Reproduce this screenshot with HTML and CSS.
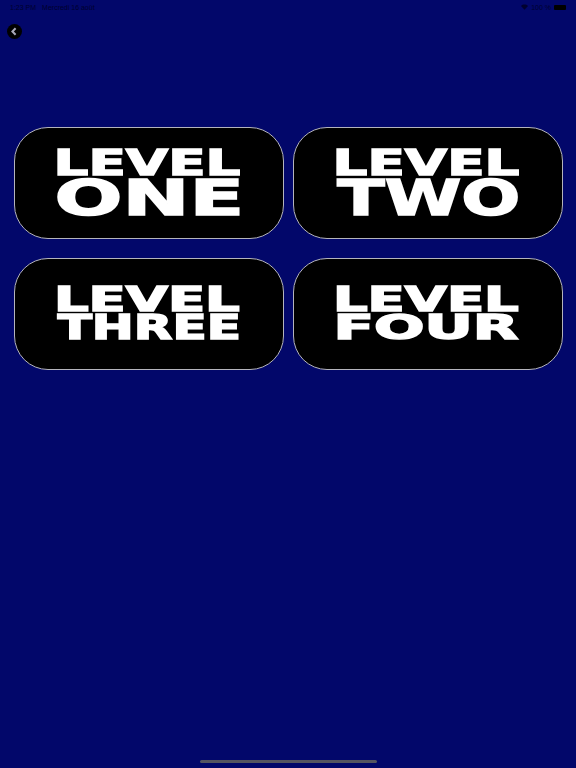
FILE: index.html
```html
<!DOCTYPE html>
<html lang="fr">
<head>
    <meta charset="UTF-8">
    <meta name="viewport" content="width=device-width, initial-scale=1.0">
    <title>Levels</title>
    <link rel="stylesheet" href="styles.css">
</head>
<body>
    <div class="page">
        <div class="status-bar">
            <div class="status-left">
                <span>1:23 PM</span>
                <span>Mercredi 16 août</span>
            </div>
            <div class="status-right">
                <svg class="wifi" viewBox="0 0 12 9" width="7" height="6">
                    <path d="M6 9 0 2.6C3.4-.8 8.6-.8 12 2.6z"/>
                </svg>
                <span>100 %</span>
                <div class="battery"></div>
            </div>
        </div>

        <button class="back-btn" aria-label="Retour">
            <svg viewBox="0 0 15 15" width="15" height="15">
                <path d="M8.6 4.2 5.4 7.5l3.2 3.3"/>
            </svg>
        </button>

        <div class="levels">
            <div class="level-card">
                <span class="word word-level">LEVEL</span>
                <span class="word word-big word-one">ONE</span>
            </div>
            <div class="level-card">
                <span class="word word-level">LEVEL</span>
                <span class="word word-big word-two">TWO</span>
            </div>
            <div class="level-card">
                <span class="word word-small word-level-small">LEVEL</span>
                <span class="word word-small word-three">THREE</span>
            </div>
            <div class="level-card">
                <span class="word word-small word-level-small">LEVEL</span>
                <span class="word word-small word-four">FOUR</span>
            </div>
        </div>

        <div class="home-bar"></div>
    </div>
</body>
</html>
```

FILE: styles.css
```css
body {
    margin: 0;
    background-color: #02076a;
    font-family: "Liberation Sans", Arial, sans-serif;
}

.page {
    height: 768px;
    display: flex;
    flex-direction: column;
    overflow: hidden;
}

.status-bar {
    height: 14px;
    padding: 0 10px;
    display: flex;
    justify-content: space-between;
    align-items: center;
    font-size: 7px;
    color: #00012e;
}

.status-left {
    display: flex;
    gap: 6px;
}

.status-right {
    display: flex;
    align-items: center;
    gap: 3px;
}

.wifi {
    fill: #00012e;
}

.battery {
    width: 12px;
    height: 5px;
    border-radius: 1px;
    background: #000;
}

.back-btn {
    width: 15px;
    height: 15px;
    margin: 10px 0 0 7px;
    padding: 0;
    border: none;
    border-radius: 50%;
    background: #000;
    display: block;
}

.back-btn svg {
    display: block;
    fill: none;
    stroke: #a8a8b8;
    stroke-width: 2;
}

.levels {
    margin-top: 88px;
    padding: 0 14px;
    display: grid;
    grid-template-columns: 269.5px 269.5px;
    grid-auto-rows: 112px;
    column-gap: 9.5px;
    row-gap: 19px;
}

.level-card {
    box-sizing: border-box;
    background: #000;
    border: 1px solid #b4b4bc;
    border-radius: 34px;
    display: flex;
    flex-direction: column;
    align-items: center;
    justify-content: center;
}

/* the words are a wide heavy display face, so stretch a bold one */
.word {
    display: block;
    width: max-content;
    will-change: transform;
    font-family: "DejaVu Sans", sans-serif;
    font-weight: 700;
    color: #fff;
    -webkit-text-stroke: 1.5px #fff;
    font-size: 36px;
    line-height: 30px;
}

.word-big {
    font-size: 50px;
    line-height: 40px;
}

.word-small {
    font-size: 33px;
    line-height: 28px;
}

.word-level {
    transform: translateX(-1.5px) scaleX(1.52);
}

.word-level-small {
    transform: translateX(-1.5px) scaleX(1.65);
}

.word-one {
    transform: translateX(1px) scaleX(1.6);
}

.word-two {
    transform: translateX(1px) scaleX(1.39);
}

.word-three {
    transform: translateX(1px) scaleX(1.52);
}

.word-four {
    transform: translateX(-1.5px) scaleX(1.8);
}

.home-bar {
    width: 177px;
    height: 3px;
    margin: auto auto 5px;
    border-radius: 2px;
    background: #555560;
}
```
